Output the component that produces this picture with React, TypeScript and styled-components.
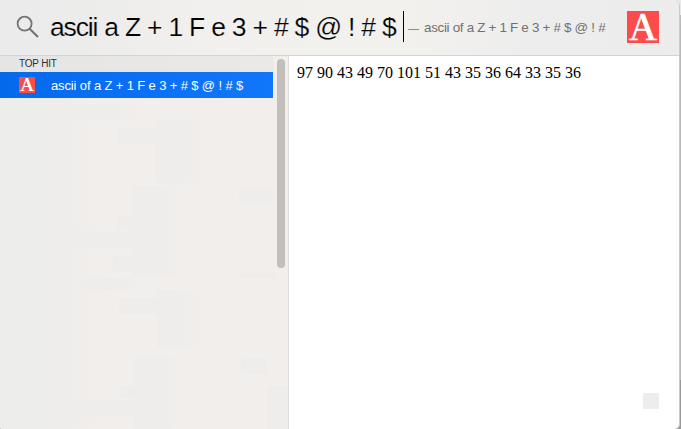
import React from 'react';
import styled, { createGlobalStyle } from 'styled-components';

const Global = createGlobalStyle`
  *, *::before, *::after { box-sizing: border-box; }
  body { margin: 0; overflow: hidden; }
`;

const sans = '"Liberation Sans", Arial, sans-serif';

type Patch = [x: number, y: number, w: number, h: number];

// Faint shapes of the desktop showing through the translucent sidebar.
const patches: Patch[] = [
  [79, 6, 70, 16], [117, 30, 39, 16], [155, 23, 60, 62],
  [239, 90, 34, 16], [132, 88, 58, 91], [117, 118, 16, 13],
  [75, 133, 58, 16], [113, 157, 20, 16], [242, 175, 35, 4],
  [81, 180, 70, 12], [119, 200, 39, 16], [157, 192, 50, 58],
  [241, 260, 26, 16], [134, 258, 53, 74], [119, 288, 16, 12],
  [77, 303, 58, 16], [267, 288, 21, 44],
];

const patchLayers = patches
  .map(([x, y, w, h]) =>
    `linear-gradient(90deg, #eeedec 40%, ${w > 45 && x !== 75 && x !== 77 ? '#f2eeeb' : '#eeedec'}) ${x}px ${y}px / ${w}px ${h}px no-repeat`)
  .join(', ');

const Desktop = styled.div`
  width: 681px;
  height: 429px;
  background: linear-gradient(#e9e9e9 0 15px, #bcbcbc 15px 24px, #b9b9b9 24px 380px, #999 380px);
`;

const Panel = styled.main`
  display: flex;
  flex-direction: column;
  width: 680px;
  height: 429px;
  overflow: hidden;
  background: #fff;
  border-right: 1px solid #c9c9c9;
  border-radius: 1px 6px 5px 2px;
`;

const SearchBar = styled.header`
  display: flex;
  align-items: center;
  height: 56px;
  flex: none;
  padding: 0 20px 2px 16px;
  background: linear-gradient(90deg, #ebebeb 0, #ececeb 80px, #f2f0ee 210px, #f3f1ed 400px, #ededed 540px, #ececec 100%);
  border-bottom: 1px solid #d5d4d3;
`;

const SearchIcon = styled.svg`
  width: 24px;
  height: 24px;
  margin-right: 10px;
  flex: none;
`;

const Query = styled.span`
  width: 353px;
  flex: none;
  font: 26.5px/46px ${sans};
  letter-spacing: -1.15px;
  word-spacing: 0.85px;
  white-space: pre;
  color: #000;
  -webkit-text-stroke: 0.18px #f0efec;
`;

const Caret = styled.span`
  width: 1px;
  height: 31px;
  margin-top: -1px;
  flex: none;
  background: #000;
`;

const Completion = styled.span`
  display: flex;
  flex: 1;
  margin-left: 4px;
  padding-top: 3px;
  font: 13.4px/20px ${sans};
  letter-spacing: -0.3px;
  white-space: pre;
  color: #72716f;
`;

const Dash = styled.span`
  width: 16px;
  font-size: 11px;
`;

const Logo = styled.svg<{ $size: number }>`
  width: ${p => p.$size}px;
  height: ${p => p.$size}px;
  flex: none;
  overflow: visible;
  background: #fb4b4b;
`;

const Body = styled.div`
  display: flex;
  flex: 1;
  min-height: 0;
`;

const Sidebar = styled.aside`
  display: flex;
  width: 289px;
  flex: none;
  background: linear-gradient(90deg, #ededec 0, #eeedec 55px, #f2eeeb 110px, #f2eeeb 100%);
  border-right: 1px solid #dddbd9;
`;

const Results = styled.div`
  display: flex;
  flex-direction: column;
  flex: 1;
`;

const SectionTitle = styled.div`
  height: 16px;
  flex: none;
  padding-left: 19px;
  background: linear-gradient(90deg, #e5e5e5, #ebe9e7);
  font: 10px/16px ${sans};
  letter-spacing: -0.2px;
  color: #2e2e2e;
`;

const ResultRow = styled.div`
  display: flex;
  align-items: center;
  gap: 16px;
  height: 26px;
  flex: none;
  padding-left: 19px;
  background: linear-gradient(90deg, #0569eb, #1077fb);
  font: 13px/24px ${sans};
  letter-spacing: -0.13px;
  white-space: pre;
  color: #fff;
`;

const ResultLabel = styled.span`
  padding-top: 2px;
`;

const Backdrop = styled.div`
  flex: 1;
  margin-right: -15px;
  background: ${patchLayers};
`;

const ScrollTrack = styled.div`
  width: 15px;
  flex: none;
  padding: 3px 3px 0 4px;
`;

const ScrollThumb = styled.div`
  position: relative;
  width: 8px;
  height: 209px;
  border-radius: 4px;
  background: #c1bebb;
`;

const Preview = styled.section`
  display: flex;
  flex: 1;
  flex-direction: column;
  justify-content: space-between;
  padding: 8px 20px 20px 8px;
`;

const Codes = styled.p`
  margin: 0;
  font: 16px/18px "Liberation Serif", "Times New Roman", serif;
  white-space: nowrap;
  color: #000;
`;

const Placeholder = styled.div`
  align-self: flex-end;
  width: 16px;
  height: 16px;
  background: #eeeded;
`;

function LetterLogo({ size }: { size: number }) {
  return (
    <Logo $size={size} viewBox="0 0 32 32">
      <text
        x="16"
        y="28.5"
        textAnchor="middle"
        fontFamily="'Liberation Serif', serif"
        fontSize="39.5"
        fill="#fff"
        stroke="#fff"
        strokeWidth="0.3"
      >
        A
      </text>
      <path d="M15.5 6L23.5 27" stroke="#fff" strokeWidth="3.6" />
    </Logo>
  );
}

export default function App() {
  return (
    <>
      <Global />
      <Desktop>
        <Panel>
          <SearchBar>
            <SearchIcon viewBox="0 0 24 24" fill="none" stroke="#747474">
              <circle cx="8.6" cy="8.7" r="7" strokeWidth="1.8" />
              <path d="M13.6 13.7L22 22" strokeWidth="2.2" />
            </SearchIcon>
            <Query>ascii a Z + 1 F e 3 + # $ @ ! # $</Query>
            <Caret />
            <Completion>
              <Dash>—</Dash>
              <span>ascii of a Z + 1 F e 3 + # $ @ ! #</span>
            </Completion>
            <LetterLogo size={32} />
          </SearchBar>
          <Body>
            <Sidebar>
              <Results>
                <SectionTitle>TOP HIT</SectionTitle>
                <ResultRow>
                  <LetterLogo size={16} />
                  <ResultLabel>ascii of a Z + 1 F e 3 + # $ @ ! # $</ResultLabel>
                </ResultRow>
                <Backdrop />
              </Results>
              <ScrollTrack>
                <ScrollThumb />
              </ScrollTrack>
            </Sidebar>
            <Preview>
              <Codes>97 90 43 49 70 101 51 43 35 36 64 33 35 36</Codes>
              <Placeholder />
            </Preview>
          </Body>
        </Panel>
      </Desktop>
    </>
  );
}
